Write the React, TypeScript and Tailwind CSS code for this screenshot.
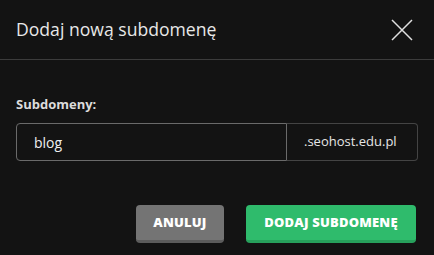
export default function App() {
  return (
    <div className="h-[255px] w-[434px] bg-[#131313] font-['Open_Sans',sans-serif] text-[#e6e6e6]">
      <header className="flex h-[60px] items-center justify-between border-b border-[#3c3c3c] pl-4 pr-[20px]">
        <h2 className="text-[17.6px] leading-none text-[#e8e8e8]">Dodaj nową subdomenę</h2>
        <button className="flex h-6 w-6 items-center justify-center">
          <svg width="22" height="22" viewBox="0 0 22 22" fill="none" stroke="#e0e0e0" strokeWidth="1.5">
            <path d="M1 1L21 21M21 1L1 21" />
          </svg>
        </button>
      </header>
      <div className="px-4 pt-[35px]">
        <label className="block text-[13px] font-bold leading-[18px] text-[#dcdcdc]">Subdomeny:</label>
        <div className="mt-[10px] flex h-[38px]">
          <input
            defaultValue="blog"
            className="h-full w-[271px] rounded-l-[4px] border border-[#6a6a6a] bg-transparent pl-[17px] text-[14px] text-[#f0f0f0] outline-none"
          />
          <div className="flex flex-1 items-center rounded-r-[4px] border border-l-0 border-[#444] pl-[17px] text-[13px] text-[#e6e6e6]">
            .seohost.edu.pl
          </div>
        </div>
        <div className="mt-[44px] flex justify-end gap-[22px] pr-[2px]">
          <button className="h-[38px] w-[88px] rounded-[4px] border-b-[3px] border-[#5c5c5c] bg-[#747474] text-[13px] font-extrabold tracking-[0.2px] text-white">
            ANULUJ
          </button>
          <button className="h-[38px] w-[170px] rounded-[4px] border-b-[3px] border-[#27a05c] bg-[#2fbb6c] text-[13px] font-extrabold tracking-[0.2px] text-white">
            DODAJ SUBDOMENĘ
          </button>
        </div>
      </div>
    </div>
  );
}
